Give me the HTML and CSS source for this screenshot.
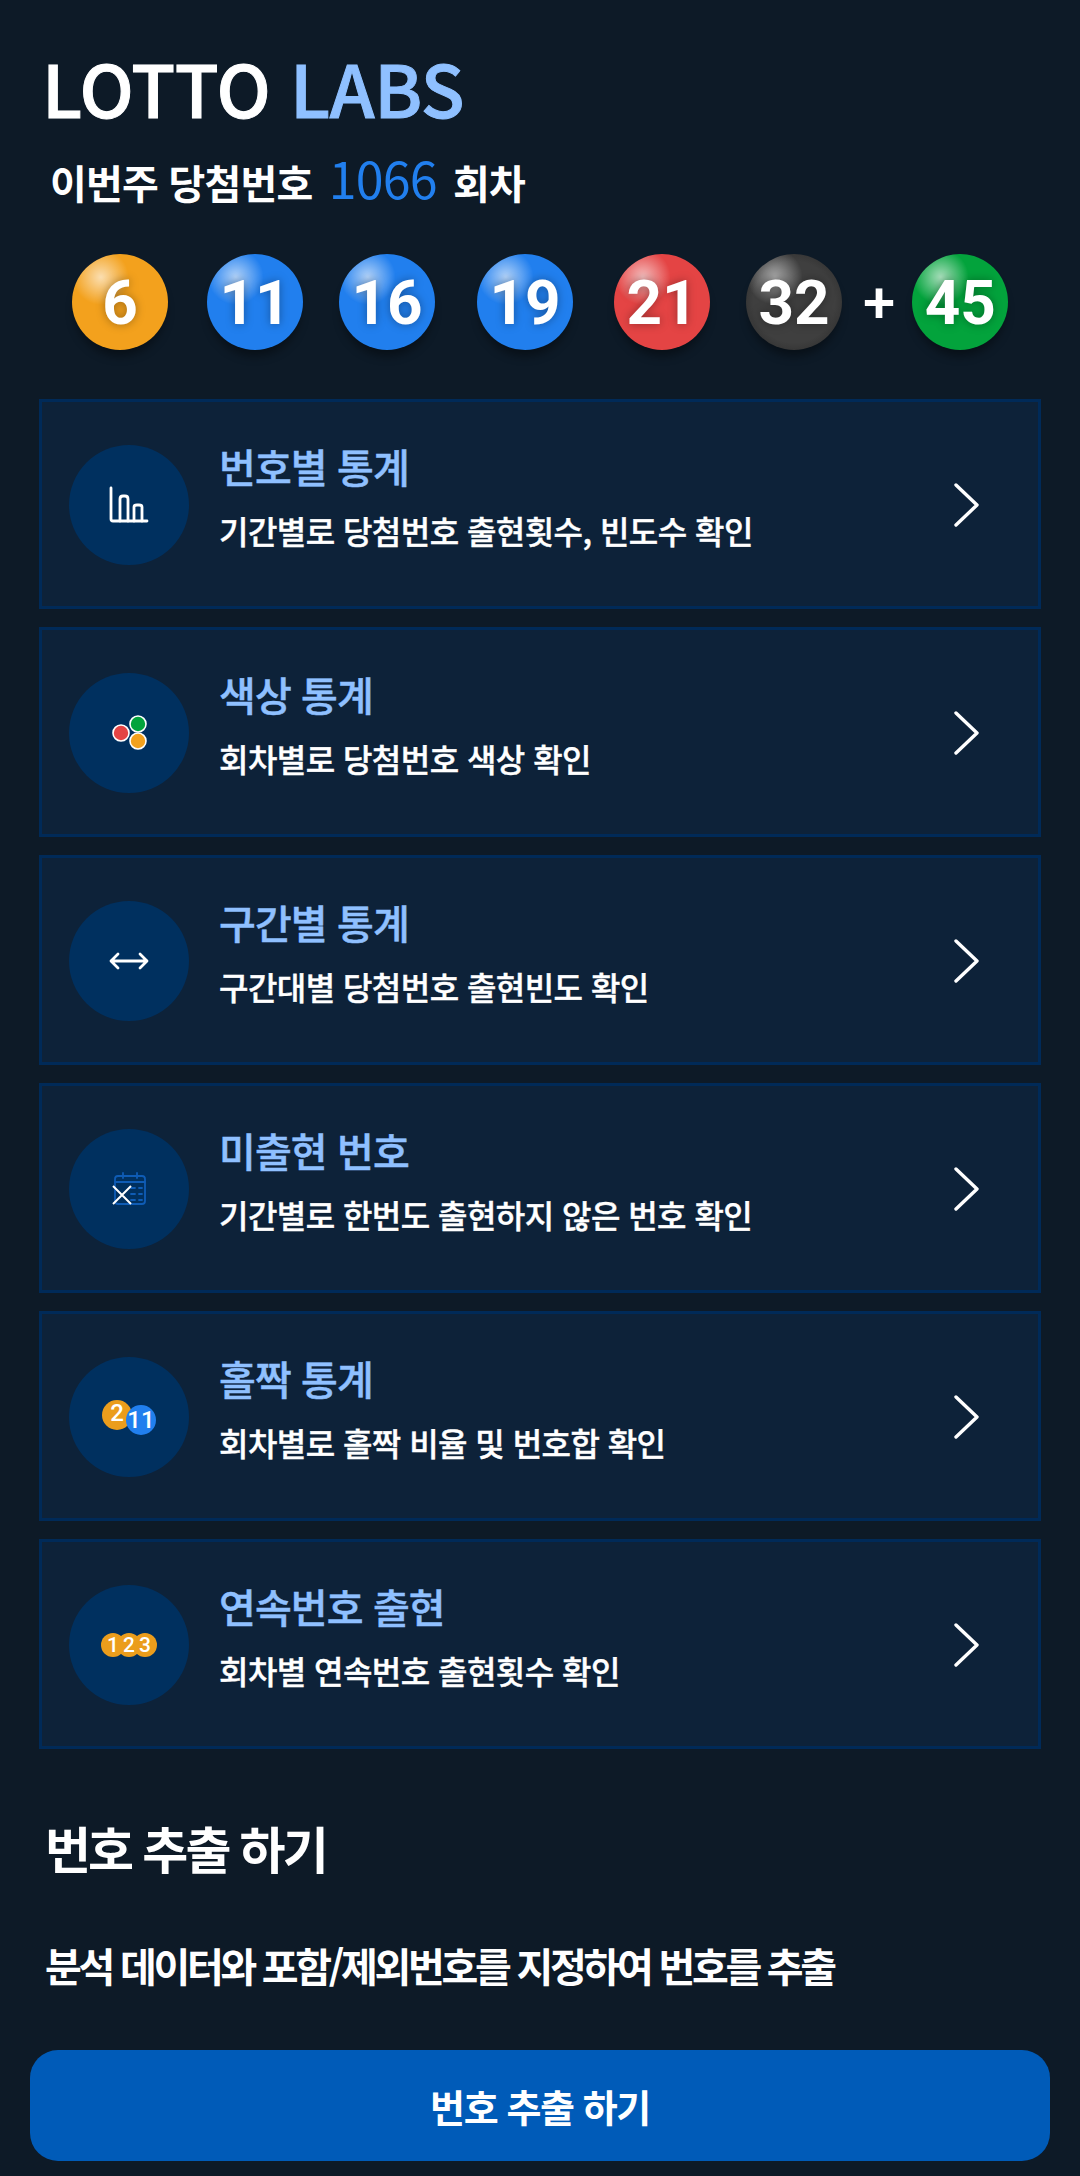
FILE: index.html
```html
<!DOCTYPE html>
<html lang="ko">
<head>
    <meta charset="UTF-8">
    <meta name="viewport" content="width=device-width, initial-scale=1.0">
    <title>Lotto Labs</title>
    <link rel="stylesheet" href="styles.css">
</head>
<body>
    <div class="container">
        <h1 class="logo">LOTTO <span>LABS</span></h1>
        <p class="round">이번주 당첨번호 <span>1066</span> 회차</p>

        <div class="balls">
            <div class="ball yellow">6</div>
            <div class="ball blue">11</div>
            <div class="ball blue">16</div>
            <div class="ball blue">19</div>
            <div class="ball red">21</div>
            <div class="ball black">32</div>
            <div class="plus">+</div>
            <div class="ball green">45</div>
        </div>

        <div class="menu">
            <div class="card">
                <div class="icon">
                    <svg width="40" height="38" viewBox="0 0 40 38" fill="none" stroke="#fff" stroke-width="2.8" stroke-linecap="round" stroke-linejoin="round">
                        <path d="M2 2V33Q2 35 4 35H38"/>
                        <path d="M11 35V13Q11 10 14 10H16Q19 10 19 13V35"/>
                        <path d="M25 35V21Q25 19 28 19H30Q33 19 33 21V35"/>
                    </svg>
                </div>
                <div class="text">
                    <h3>번호별 통계</h3>
                    <p>기간별로 당첨번호 출현횟수, 빈도수 확인</p>
                </div>
                <svg class="arrow" width="28" height="44" viewBox="0 0 28 44" fill="none" stroke="#fff" stroke-width="3.4" stroke-linecap="round" stroke-linejoin="round"><path d="M5 2L26 22L5 42"/></svg>
            </div>
            <div class="card">
                <div class="icon">
                    <svg class="dots" width="44" height="44" viewBox="0 0 44 44" stroke="#fff" stroke-width="1.6">
                        <circle cx="9" cy="22" r="8" fill="#e44444"/>
                        <circle cx="26" cy="13" r="8" fill="#03a33c"/>
                        <circle cx="26" cy="30" r="8" fill="#f3a11d"/>
                    </svg>
                </div>
                <div class="text">
                    <h3>색상 통계</h3>
                    <p>회차별로 당첨번호 색상 확인</p>
                </div>
                <svg class="arrow" width="28" height="44" viewBox="0 0 28 44" fill="none" stroke="#fff" stroke-width="3.4" stroke-linecap="round" stroke-linejoin="round"><path d="M5 2L26 22L5 42"/></svg>
            </div>
            <div class="card">
                <div class="icon">
                    <svg width="40" height="20" viewBox="0 0 40 20" fill="none" stroke="#fff" stroke-width="2.8" stroke-linecap="round" stroke-linejoin="round">
                        <path d="M2 10H38M9 3L2 10L9 17M31 3L38 10L31 17"/>
                    </svg>
                </div>
                <div class="text">
                    <h3>구간별 통계</h3>
                    <p>구간대별 당첨번호 출현빈도 확인</p>
                </div>
                <svg class="arrow" width="28" height="44" viewBox="0 0 28 44" fill="none" stroke="#fff" stroke-width="3.4" stroke-linecap="round" stroke-linejoin="round"><path d="M5 2L26 22L5 42"/></svg>
            </div>
            <div class="card">
                <div class="icon">
                    <svg width="36" height="36" viewBox="0 0 36 36" fill="none">
                        <g stroke="#0f5cb5" stroke-width="1.8" stroke-linecap="round">
                            <rect x="4" y="5" width="30" height="28" rx="3"/>
                            <path d="M4 11H34M12 2V7M26 2V7"/>
                            <path d="M20 17H24M28 17H31M20 23H24M28 23H31M20 29H24M28 29H31"/>
                        </g>
                        <path d="M2 15L20 33M20 15L2 33" stroke="#fff" stroke-width="2"/>
                    </svg>
                </div>
                <div class="text">
                    <h3>미출현 번호</h3>
                    <p>기간별로 한번도 출현하지 않은 번호 확인</p>
                </div>
                <svg class="arrow" width="28" height="44" viewBox="0 0 28 44" fill="none" stroke="#fff" stroke-width="3.4" stroke-linecap="round" stroke-linejoin="round"><path d="M5 2L26 22L5 42"/></svg>
            </div>
            <div class="card">
                <div class="icon">
                    <div class="mini mini-pair">
                        <span class="mini-yellow">2</span>
                        <span class="mini-blue">11</span>
                    </div>
                </div>
                <div class="text">
                    <h3>홀짝 통계</h3>
                    <p>회차별로 홀짝 비율 및 번호합 확인</p>
                </div>
                <svg class="arrow" width="28" height="44" viewBox="0 0 28 44" fill="none" stroke="#fff" stroke-width="3.4" stroke-linecap="round" stroke-linejoin="round"><path d="M5 2L26 22L5 42"/></svg>
            </div>
            <div class="card">
                <div class="icon">
                    <div class="mini mini-row">
                        <span class="mini-yellow">1</span>
                        <span class="mini-yellow">2</span>
                        <span class="mini-yellow">3</span>
                    </div>
                </div>
                <div class="text">
                    <h3>연속번호 출현</h3>
                    <p>회차별 연속번호 출현횟수 확인</p>
                </div>
                <svg class="arrow" width="28" height="44" viewBox="0 0 28 44" fill="none" stroke="#fff" stroke-width="3.4" stroke-linecap="round" stroke-linejoin="round"><path d="M5 2L26 22L5 42"/></svg>
            </div>
        </div>

        <h2 class="section-title">번호 추출 하기</h2>
        <p class="section-desc">분석 데이터와 포함/제외번호를 지정하여 번호를 추출</p>
    </div>
    <button class="extract-btn">번호 추출 하기</button>
</body>
</html>
```

FILE: styles.css
```css
* {
    box-sizing: border-box;
}
body {
    font-family: "Noto Sans CJK KR", "Noto Sans", sans-serif;
    background: #0d1a27;
    color: white;
    margin: 0;
    padding: 0;
    width: 1080px;
    height: 2176px;
    overflow: hidden;
}
.container {
    padding: 35px 39px 0;
}
.logo {
    margin: 0 0 0 3px;
    font-size: 72px;
    line-height: 104px;
    font-weight: 500;
    -webkit-text-stroke: 1px currentColor;
    letter-spacing: -0.4px;
}
.logo span {
    color: #8fc0ff;
}
.round {
    margin: 8px 0 0 11px;
    font-size: 40px;
    line-height: 60px;
    font-weight: 700;
    letter-spacing: -0.8px;
}
.round span {
    color: #217fee;
    font-weight: 400;
    font-size: 50px;
    margin: 0 6px;
}
.balls {
    display: flex;
    align-items: center;
    margin: 42px 0 0 33px;
    height: 96px;
}
.ball {
    width: 96px;
    height: 96px;
    border-radius: 50%;
    margin-right: 39px;
    flex-shrink: 0;
    display: flex;
    align-items: center;
    justify-content: center;
    font-family: Roboto, sans-serif;
    font-weight: 700;
    font-size: 62px;
    color: white;
    text-shadow: 0 0 10px rgba(0, 0, 0, 0.35);
    box-shadow: 0 9px 10px -3px rgba(0, 0, 0, 0.4);
    background-image: radial-gradient(circle at 30% 24%, rgba(255, 255, 255, 0.65), rgba(255, 255, 255, 0) 28%);
}
/* numbers aren't evenly spaced in the original row */
.ball:nth-child(2) { margin-right: 36px; }
.ball:nth-child(3) { margin-right: 42px; }
.ball:nth-child(4) { margin-right: 41px; }
.ball:nth-child(5) { margin-right: 36px; }
.yellow { background-color: #f3a11d; }
.blue { background-color: #217fee; }
.red { background-color: #e44444; }
.green { background-color: #03a33c; }
.black {
    background-color: #3b3b3b;
    background-image: radial-gradient(circle at 30% 24%, rgba(255, 255, 255, 0.55), rgba(255, 255, 255, 0) 28%), radial-gradient(circle, #3f3f3f 60%, #222 100%);
}
.plus {
    font-family: Roboto, sans-serif;
    font-size: 58px;
    font-weight: 500;
    margin: 0 17px 0 -18px;
}
.menu {
    margin-top: 49px;
    display: flex;
    flex-direction: column;
    gap: 18px;
}
.card {
    height: 210px;
    display: flex;
    align-items: center;
    background: #0d2239;
    border: 3px solid #002a58;
    padding: 2px 59px 0 27px;
}
.icon {
    width: 120px;
    height: 120px;
    border-radius: 50%;
    background: #00305f;
    display: flex;
    align-items: center;
    justify-content: center;
    flex-shrink: 0;
}
.dots {
    margin-left: 10px;
}
.text {
    margin-left: 30px;
    flex: 1;
    padding-bottom: 20px;
}
.text h3 {
    margin: 0;
    font-size: 40px;
    line-height: 58px;
    font-weight: 500;
    -webkit-text-stroke: 0.5px currentColor;
    color: #8fc0ff;
    letter-spacing: -0.9px;
}
.text p {
    margin: 12px 0 0;
    font-size: 32px;
    line-height: 46px;
    font-weight: 500;
    -webkit-text-stroke: 0.4px currentColor;
    color: white;
    letter-spacing: -0.55px;
}
.arrow {
    flex-shrink: 0;
}
.mini {
    display: flex;
    font-family: Roboto, sans-serif;
    font-weight: 500;
    color: white;
}
.mini span {
    border-radius: 50%;
    display: flex;
    align-items: center;
    justify-content: center;
}
.mini-yellow { background: #eb9d1c; }
.mini-blue { background: #217fee; }
.mini-pair span {
    width: 30px;
    height: 30px;
    font-size: 24px;
}
.mini-pair .mini-blue {
    margin: 5px 0 0 -6px;
}
.mini-pair .mini-yellow {
    margin-bottom: 5px;
    align-items: flex-start;
    line-height: 26px;
}
.mini-row span {
    width: 24px;
    height: 24px;
    font-size: 21px;
}
.mini-row span + span {
    margin-left: -8px;
}
.section-title {
    margin: 63px 0 0 6px;
    font-size: 50px;
    line-height: 70px;
    font-weight: 700;
    letter-spacing: -2.9px;
}
.section-desc {
    margin: 54px 0 0 6px;
    font-size: 40px;
    line-height: 58px;
    font-weight: 700;
    letter-spacing: -3.3px;
}
.extract-btn {
    display: block;
    position: fixed;
    left: 30px;
    bottom: 15px;
    width: 1020px;
    height: 111px;
    border: none;
    border-radius: 28px;
    background: #005bb8;
    color: white;
    font-family: inherit;
    font-size: 38px;
    font-weight: 700;
    letter-spacing: -1.4px;
}
```
